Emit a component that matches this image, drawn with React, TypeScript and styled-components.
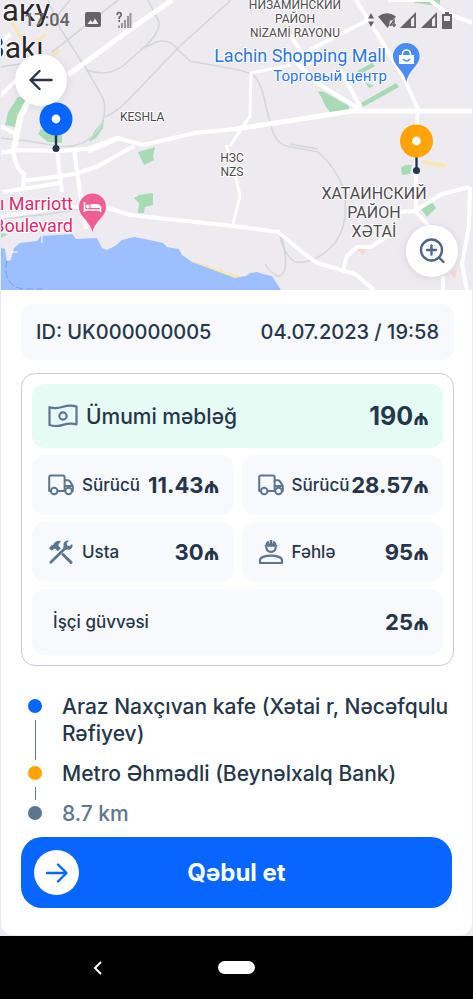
import React from 'react';
import styled, { createGlobalStyle } from 'styled-components';

const ink = '#26364a';
const slate = '#5d7690';
const blue = '#0666ff';
const amber = '#ffa306';

const GlobalStyle = createGlobalStyle`
  * { box-sizing: border-box; }
  body { margin: 0; background: #e9eaf4; color: ${ink}; font-family: Inter, "Noto Sans", sans-serif; }
  button { font: inherit; border: 0; cursor: pointer; }
  p, dl, dd, dt, ol { margin: 0; padding: 0; }
  svg { display: block; flex: none; }
`;

const Screen = styled.div`
  min-height: 100vh;
  display: flex;
  flex-direction: column;
`;

const MapArea = styled.section`
  position: relative;
  height: 290px;
  margin: 0 1px;
  overflow: hidden;
`;

const MapCanvas = styled.svg`
  width: 100%;
  height: 100%;
`;

const MapLabel = styled.text<{ $size: number; $color?: string }>`
  font-family: Roboto, sans-serif;
  font-size: ${p => p.$size}px;
  fill: ${p => p.$color || '#4d4a4e'};
  stroke: #fff;
  stroke-width: 2px;
  stroke-linejoin: round;
  paint-order: stroke;
`;

const StatusBar = styled.header`
  position: absolute;
  inset: 10px 20px auto 23px;
  height: 20px;
  display: flex;
  align-items: center;
  justify-content: space-between;
  color: #666368;
`;

const StatusGroup = styled.div<{ $gap: number }>`
  display: flex;
  align-items: center;
  gap: ${p => p.$gap}px;
`;

const Clock = styled.span`
  font: 500 18px/20px Roboto, sans-serif;
`;

const RoundButton = styled.button<{ $place: 'top' | 'bottom' }>`
  position: absolute;
  ${p => (p.$place === 'top' ? 'top: 54px; left: 14px;' : 'bottom: 13px; right: 14px;')}
  width: 52px;
  height: 52px;
  padding: 0;
  display: grid;
  place-items: center;
  border-radius: 50%;
  background: #fff;
  box-shadow: 0 1px 10px rgba(60, 70, 100, 0.14);
`;

const Sheet = styled.main`
  flex: 1;
  display: flex;
  flex-direction: column;
  margin: 0 1px;
  padding: 14px 18px 27px 20px;
  background: #fff;
  border-radius: 0 0 12px 12px;
`;

const OrderBar = styled.div`
  display: flex;
  align-items: center;
  justify-content: space-between;
  height: 56px;
  padding: 0 15px;
  border-radius: 12px;
  background: #f7f9fd;
  font-size: 20px;
  font-weight: 500;
  white-space: nowrap;
`;

const PriceCard = styled.dl`
  display: grid;
  grid-template-columns: 1fr 1fr;
  gap: 7px 8px;
  margin-top: 13px;
  padding: 10px;
  border: 1px solid #c9cbe2;
  border-radius: 14px;
`;

const PriceRow = styled.div<{ $kind: 'total' | 'half' | 'wide' }>`
  grid-column: ${p => (p.$kind === 'half' ? 'auto' : '1 / -1')};
  height: ${p => ({ total: 64, half: 60, wide: 66 })[p.$kind]}px;
  display: flex;
  align-items: center;
  justify-content: space-between;
  min-width: 0;
  padding: 0 14px 0 ${p => (p.$kind === 'wide' ? 21 : 16)}px;
  border-radius: 13px;
  background: ${p => (p.$kind === 'total' ? '#e5fbf4' : '#f7f9fd')};
`;

const PriceName = styled.dt<{ $large?: boolean }>`
  display: flex;
  align-items: center;
  gap: 8px;
  font-size: ${p => (p.$large ? 21 : 17)}px;
  font-weight: 500;
  white-space: nowrap;
`;

const PriceValue = styled.dd<{ $large?: boolean }>`
  display: flex;
  align-items: baseline;
  font-size: ${p => (p.$large ? 25 : 22)}px;
  font-weight: 700;
  white-space: nowrap;
`;

const Currency = styled.span`
  font-size: 21px;
`;

const Route = styled.ol`
  margin-top: 27px;
  list-style: none;
  font-size: 21px;
  font-weight: 500;
  line-height: 27px;
`;

const Stop = styled.li<{ $muted?: boolean }>`
  display: flex;
  gap: 20px;
  padding-left: 7px;
  color: ${p => (p.$muted ? slate : ink)};
`;

const Track = styled.span`
  display: flex;
  flex-direction: column;
  align-items: center;
  gap: 7px;
  padding-top: 6px;
`;

const Dot = styled.i<{ $color: string }>`
  width: 14px;
  height: 14px;
  border-radius: 50%;
  background: ${p => p.$color};
`;

const Line = styled.i`
  flex: 1;
  width: 1px;
  background: ${slate};
`;

const StopText = styled.span<{ $last?: boolean }>`
  flex: 1;
  padding-bottom: ${p => (p.$last ? 0 : 13)}px;
`;

const AcceptButton = styled.button`
  display: grid;
  grid-template-columns: 45px 1fr 45px;
  align-items: center;
  height: 71px;
  margin: 10px 2px 0 0;
  padding: 0 13px;
  border-radius: 21px;
  background: ${blue};
  color: #fff;
  && { font-size: 24px; font-weight: 700; }
`;

const ArrowDisc = styled.span`
  display: grid;
  place-items: center;
  height: 45px;
  border-radius: 50%;
  background: #fff;
`;

const NavBar = styled.nav`
  display: grid;
  grid-template-columns: 1fr auto 1fr;
  align-items: center;
  height: 63px;
  margin-top: 1px;
  background: #000;
`;

const NavBack = styled.button`
  justify-self: center;
  margin-right: 24px;
  padding: 12px;
  background: none;
`;

const HomePill = styled.button`
  width: 37px;
  height: 13px;
  padding: 0;
  border-radius: 7px;
  background: #fff;
`;

const BanknoteIcon = () => (
  <svg width="30" height="24" viewBox="0 0 30 24" fill="none" stroke={slate} strokeWidth="2.2" strokeLinejoin="round">
    <path d="M1.5 3.2C6 4.6 10 4.3 15 2.8S24 1.2 28.5 2.6V20.5C24 19 20 19.3 15 20.9S6 22.4 1.5 21Z" />
    <circle cx="15" cy="12" r="3.6" />
  </svg>
);

const TruckIcon = () => (
  <svg width="26" height="22" viewBox="0 0 26 22" fill="none" stroke={slate} strokeWidth="2" strokeLinejoin="round">
    <path d="M2.5 17H1.2V3.2C1.2 2 1.8 1.4 3 1.4H14.8C16 1.4 16.6 2 16.6 3.2V17H10" />
    <path d="M16.6 6.2H20C21 6.2 21.5 6.6 22 7.4L24.8 12V17H24M16.6 12H24.8" />
    <circle cx="6.2" cy="17" r="3.3" />
    <circle cx="20.6" cy="17" r="3.3" />
  </svg>
);

const ToolsIcon = () => (
  <svg width="26" height="24" viewBox="0 0 26 24" fill={slate}>
    <path d="M1 8.2 3.6 5 5 5.2C6.2 2.2 8.6.7 12 .8L12.7 2 10.4 4.2 10.6 6.1 12.8 8.3 9.8 11.3 7.3 8.8 5.8 8.9 3.8 10.7Z" />
    <path d="M15 14.5 23 22.4" fill="none" stroke={slate} strokeWidth="2.9" strokeLinecap="round" />
    <path d="M2.8 22.3 17.6 7.8" fill="none" stroke={slate} strokeWidth="2.7" strokeLinecap="round" />
    <path d="M20.9.7 18.8 3.1 19.2 5.6 21.7 6.1 24.2 3.9C25.6 7.5 22.7 10.4 19.3 9.6L17.3 10 15.2 7.9 15.6 5.8C14.8 2.7 17.5.1 20.9.7Z" />
  </svg>
);

const WorkerIcon = () => (
  <svg width="26" height="26" viewBox="0 0 26 26" fill="none" stroke={slate} strokeWidth="2.2">
    <path d="M2 24V21.2C2 18.5 7 16.6 13 16.6S24 18.5 24 21.2V24Z" strokeLinejoin="round" />
    <path d="M8.2 7.4C8.2 10.8 10 12.8 13 12.8S17.8 10.8 17.8 7.4" />
    <path d="M6.7 7.7V6H7.5C7.7 3.9 8.8 2.6 10.6 1.8L11.2 4.4H11.7V1H14.3V4.4H14.8L15.4 1.8C17.2 2.6 18.3 3.9 18.5 6H19.3V7.7Z" fill={slate} stroke="none" />
  </svg>
);

const Arrow = ({ flip, color }: { flip?: boolean; color: string }) => (
  <svg width="24" height="22" viewBox="0 0 24 22" fill="none" stroke={color} strokeWidth="2.4" strokeLinecap="round" strokeLinejoin="round">
    {flip ? <path d="M22.500 11H1.500M10.500 2 1.500 11 10.500 20" /> : <path d="M2 11H21M13 2.500 21.500 11 13 19.500" />}
  </svg>
);

const SignalIcon = () => (
  <svg width="17" height="16" viewBox="0 0 17 16">
    <path d="M0 16 16 0V16Z" fill="#666368" />
    <path d="M11 7.5 14.2 4.4V14.2H11Z" fill="#eeebf0" />
  </svg>
);

const CityMap = () => (
  <MapCanvas viewBox="1 0 471 290" preserveAspectRatio="xMidYMid slice" aria-label="Xəritə">
    <rect width="473" height="290" fill="#eeebf0" />
    <g fill="#a8dab5">
      <path d="M5 125 8 112 18 97 32 98 21 112 15 127Z" />
      <path d="M38 134 41 129 62 131V143L48 142Z" />
      <path d="M104 119 103 128 96 138 89 142 94 132Z" />
      <path d="M138 152 155 147 153 156 154 160 144 165Z" />
      <path d="M134 198 139 195 153 193V205L145 207 144 213H138L139 203Z" />
      <path d="M318 91 324 92 349 106V111L331 113 326 107Z" />
      <path d="M361 103 396 83 399 87 363 107Z" />
      <path d="M357 71 372 63 375 66 361 74ZM365 82 374 86 369 88Z" />
      <path d="M412 0H440V6L415 3Z" />
      <path d="M401 168 405 165 412 165 410 174 402 175Z" />
      <path d="M421 209 431 200 436 208 427 217Z" />
      <path d="M0 233 8 234 1 238Z" />
    </g>
    <g stroke="#f8e6b4" strokeWidth="3" fill="none">
      <path d="M12 22 22 40M30 44 46 35M52 55 60 50" />
      <path d="M422 162 446 166" strokeWidth="4" />
      <path d="M191 262 245 279" />
    </g>
    <path d="M355 248H367L363 255ZM450 272 457 269 455 279Z" fill="#f9d9cf" />
    <path d="M0 247 5 249 7 261 11 260 14 248 20 243 37 241 41 236 72 234 76 239 97 238 102 248 107 250 115 246 122 240 134 237 150 240 163 243 167 247 179 249 182 255 192 262 235 278 246 276 250 273 257 272 263 274 272 276 281 290H0Z" fill="#9cc0fd" />
    <path d="M7 261C3 276 10 288 24 289H45" fill="none" stroke="#6f9ff0" strokeWidth="1" strokeDasharray="7 3" />
    <g fill="none" stroke="#d3d7dc" strokeWidth="1.6">
      <path d="M48 0 60 28 87 70 103 98Q109 118 94 135 80 149 58 146L28 141 0 138" />
      <path d="M148 0 159 22Q160 34 142 49L124 65Q108 78 87 70" />
      <path d="M231 0 180 46 134 94Q118 112 105 117" />
      <path d="M140 50 156 42Q170 38 178 50L190 61 239 70 252 74Q262 82 266 107L273 132Q278 146 292 147L318 152Q336 168 343 187 351 220 335 243 315 265 295 262 284 255 280 236" />
      <path d="M0 67 20 64M52 52 118 0M70 0 50 25M282 237Q291 277 277 276 268 270 265 264M290 144 318 149" />
      <path d="M0 219 50 214 78 209" />
    </g>
    <g fill="none" stroke="#fff" strokeLinejoin="round">
      <path d="M172 0 128 31 68 75" strokeWidth="5" />
      <path d="M0 96 18 78M0 44 10 34M0 126 16 134M0 153 17 150 58 151 88 149 118 138 143 145 195 133 236 129" strokeWidth="4" />
      <path d="M118 138 98 147 88 151M236 129 353 111 473 111" strokeWidth="5" />
      <path d="M30 98 20 117 14 149" strokeWidth="6" />
      <path d="M12 150 18 168 24 174 23 188M57 150 62 192M74 150 80 192 86 229M3 192 60 183M23 181 75 174 98 166 134 146" strokeWidth="4" />
      <path d="M0 217 62 207 108 208 130 215 233 226 278 232 302 252 317 263 355 274 374 290" strokeWidth="4" />
      <path d="M226 145 236 178 240 196 233 224M230 146 250 116 251 73 291 65" strokeWidth="3" />
      <path d="M356 0 378 35 404 78 418 109 416 142V212M368 20 323 43 293 59 317 83 358 108M340 70 361 108M290 35 310 65" strokeWidth="4" />
      <path d="M388 0 430 0 448 14 473 23M397 212 415 211 442 194 470 187M415 211 430 227M443 276V290M470 187 469 226 462 264 467 290M391 234 371 247H357L347 256 343 270" strokeWidth="4" />
      <path d="M42 236V243M11 252H18" strokeWidth="1" />
    </g>
    <MapLabel $size={31} $color="#29272b" x="2" y="21">аку</MapLabel>
    <MapLabel $size={30} $color="#29272b" x="-14" y="58">Bakı</MapLabel>
    <MapLabel $size={12} x="120" y="121">KESHLA</MapLabel>
    <g textAnchor="middle">
      <MapLabel $size={12} x="295" y="9">НИЗАМИНСКИЙ</MapLabel>
      <MapLabel $size={12} x="295" y="23">РАЙОН</MapLabel>
      <MapLabel $size={12} x="295" y="37">NİZAMİ RAYONU</MapLabel>
      <MapLabel $size={12} x="232" y="162">НЗС</MapLabel>
      <MapLabel $size={12} x="232" y="176">NZS</MapLabel>
      <MapLabel $size={16} x="374" y="199">ХАТАИНСКИЙ</MapLabel>
      <MapLabel $size={16} x="374" y="218">РАЙОН</MapLabel>
      <MapLabel $size={16} x="374" y="237">ХƏТАİ</MapLabel>
    </g>
    <g textAnchor="end">
      <MapLabel $size={18} $color="#2a76e0" x="386" y="62">Lachin Shopping Mall</MapLabel>
      <MapLabel $size={15} $color="#2a76e0" x="387" y="81">Торговый центр</MapLabel>
      <MapLabel $size={18} $color="#d92d6d" x="73" y="210">Bakı Marriott</MapLabel>
      <MapLabel $size={18} $color="#d92d6d" x="73" y="232">Boulevard</MapLabel>
    </g>
    <path d="M406 43A13.3 13.3 0 0 1 419.6 56C419.6 66 409 69 406.4 82 403.5 69 393 66 393 56A13.3 13.3 0 0 1 406 43Z" fill="#4a8cf2" />
    <path d="M399 55H414V64H399Z" fill="#fff" />
    <path d="M402.5 55V54A4 4 0 0 1 410.5 54V55" fill="none" stroke="#fff" strokeWidth="1.6" />
    <path d="M403 59Q406.5 63 410 59" fill="none" stroke="#4a8cf2" strokeWidth="1.5" />
    <path d="M92.5 193.5A13.3 13.3 0 0 1 106 207C106 217 95.5 220 92.5 232 89.5 220 79 217 79 207A13.3 13.3 0 0 1 92.5 193.5Z" fill="#ef5f93" />
    <path d="M84.5 202V212M84.5 210H100.5M100.5 206V212" stroke="#fff" strokeWidth="1.6" fill="none" />
    <path d="M90.5 204H97Q100.5 204 100.5 208H90.5Z" fill="#fff" />
    <circle cx="87.8" cy="206.5" r="1.9" fill="#fff" />
    <g stroke={ink} strokeWidth="2.4">
      <path d="M56 132V149M416.5 155V171" />
    </g>
    <g fill={ink}>
      <circle cx="56" cy="148.5" r="3.5" />
      <circle cx="416.5" cy="170.5" r="3.5" />
    </g>
    <circle cx="56" cy="119" r="16.5" fill={blue} />
    <circle cx="416.5" cy="141" r="16.5" fill={amber} />
    <g fill="#fff">
      <circle cx="56" cy="119" r="4.4" />
      <circle cx="416.5" cy="141" r="4.4" />
    </g>
  </MapCanvas>
);

type PriceProps = { kind: 'total' | 'half' | 'wide'; icon?: React.ReactNode; name: string; amount: string };

const Price = ({ kind, icon, name, amount }: PriceProps) => (
  <PriceRow $kind={kind}>
    <PriceName $large={kind === 'total'}>{icon}{name}</PriceName>
    <PriceValue $large={kind === 'total'}>{amount}<Currency>₼</Currency></PriceValue>
  </PriceRow>
);

export default function App() {
  return (
    <Screen>
      <GlobalStyle />
      <MapArea>
        <CityMap />
        <StatusBar>
          <StatusGroup $gap={15}>
            <Clock>17:04</Clock>
            <svg width="16" height="16" viewBox="0 0 16 16">
              <rect width="16" height="15" rx="2" fill="#666368" />
              <path d="M2.5 12 5.5 8 7.5 10.5 10 6.5 13.5 12Z" fill="#eeebf0" />
            </svg>
            <svg width="16" height="18" viewBox="0 0 16 18">
              <path d="M3 17V14.5M6 17V12M9 17V9M12 17V5M14.5 17V2" stroke="#999599" strokeWidth="2" />
              <path d="M1.2 4Q1.2 1.5 3.2 1.5T5.2 4Q5.2 5 3.2 6.5V8M3.2 9V11" stroke="#666368" strokeWidth="1.6" fill="none" />
            </svg>
          </StatusGroup>
          <StatusGroup $gap={4}>
            <svg width="6" height="14" viewBox="0 0 6 14" fill="#666368"><path d="M0 5.5 3 0 6 5.5ZM0 8.5H6L3 14Z" /></svg>
            <svg width="18" height="15" viewBox="0 0 18 15">
              <path d="M0 3.5Q9-3 18 3.5L14.5 7.5H12L11 13 9.5 15Z" fill="#666368" />
              <path d="M16 14V7.5L12.5 12H18" fill="none" stroke="#666368" strokeWidth="1.5" />
            </svg>
            <SignalIcon />
            <SignalIcon />
            <svg width="10" height="17" viewBox="0 0 10 17">
              <path d="M3 0H7V2H10V17H0V2H3Z" fill="#666368" />
              <path d="M2 4H8V9H2Z" fill="#eeebf0" />
            </svg>
          </StatusGroup>
        </StatusBar>
        <RoundButton $place="top" aria-label="Geri"><Arrow flip color={ink} /></RoundButton>
        <RoundButton $place="bottom" aria-label="Böyüt">
          <svg width="26" height="26" viewBox="0 0 26 26" fill="none" stroke="#4d6985" strokeWidth="2.4" strokeLinecap="round">
            <circle cx="12.5" cy="12" r="10.5" />
            <path d="M12.5 7.5V16.5M8 12H17M20 19.5 24.5 24" />
          </svg>
        </RoundButton>
      </MapArea>

      <Sheet>
        <OrderBar>
          <span>ID: UK000000005</span>
          <time dateTime="2023-07-04T19:58">04.07.2023 / 19:58</time>
        </OrderBar>

        <PriceCard>
          <Price kind="total" icon={<BanknoteIcon />} name="Ümumi məbləğ" amount="190" />
          <Price kind="half" icon={<TruckIcon />} name="Sürücü" amount="11.43" />
          <Price kind="half" icon={<TruckIcon />} name="Sürücü" amount="28.57" />
          <Price kind="half" icon={<ToolsIcon />} name="Usta" amount="30" />
          <Price kind="half" icon={<WorkerIcon />} name="Fəhlə" amount="95" />
          <Price kind="wide" name="İşçi güvvəsi" amount="25" />
        </PriceCard>

        <Route>
          <Stop>
            <Track><Dot $color={blue} /><Line /></Track>
            <StopText>Araz Naxçıvan kafe (Xətai r, Nəcəfqulu Rəfiyev)</StopText>
          </Stop>
          <Stop>
            <Track><Dot $color={amber} /><Line /></Track>
            <StopText>Metro Əhmədli (Beynəlxalq Bank)</StopText>
          </Stop>
          <Stop $muted>
            <Track><Dot $color={slate} /></Track>
            <StopText $last>8.7 km</StopText>
          </Stop>
        </Route>

        <AcceptButton>
          <ArrowDisc><Arrow color={blue} /></ArrowDisc>
          <span>Qəbul et</span>
        </AcceptButton>
      </Sheet>

      <NavBar>
        <NavBack aria-label="Geri">
          <svg width="9" height="14" viewBox="0 0 9 14" fill="none" stroke="#fff" strokeWidth="2"><path d="M8 1 2 7 8 13" /></svg>
        </NavBack>
        <HomePill aria-label="Əsas ekran" />
      </NavBar>
    </Screen>
  );
}
